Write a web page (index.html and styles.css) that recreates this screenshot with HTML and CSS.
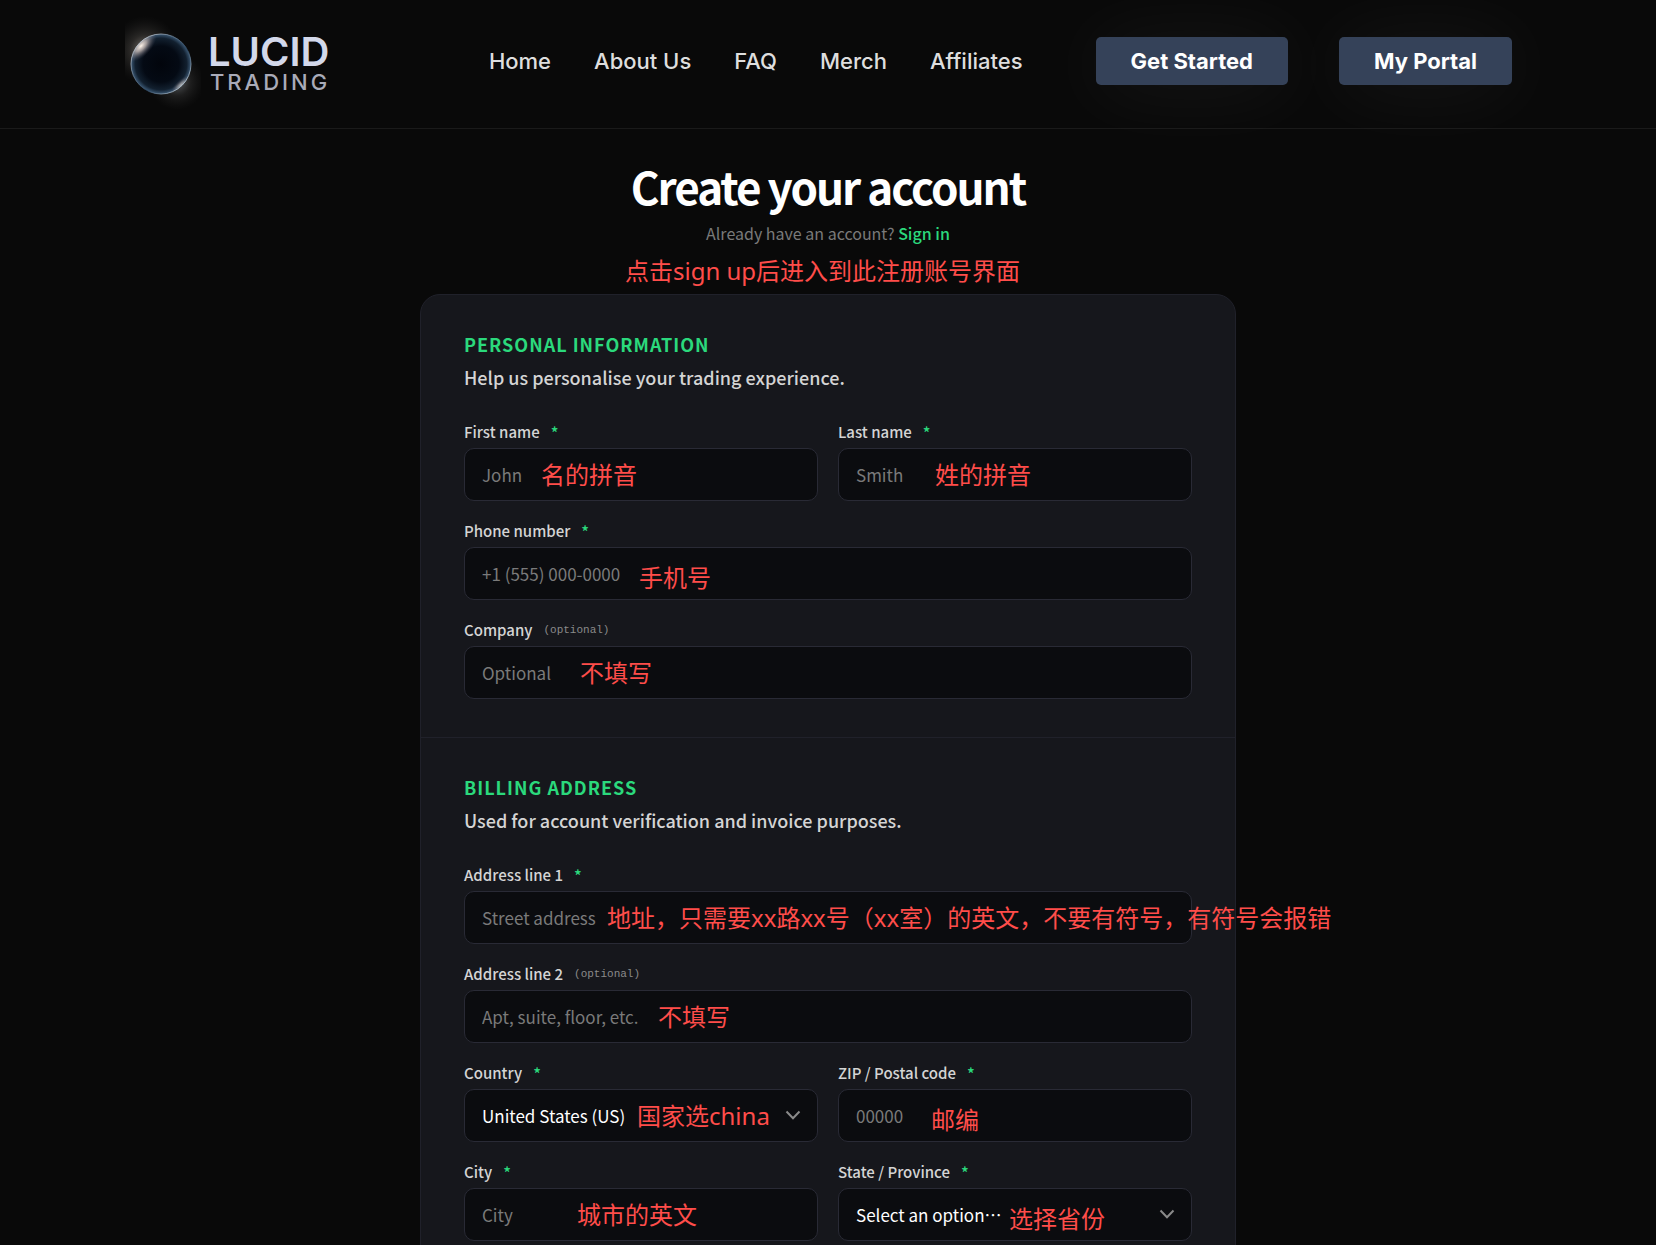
FILE: index.html
```html
<!DOCTYPE html>
<html lang="zh-CN">
<head>
<meta charset="utf-8">
<meta name="viewport" content="width=device-width, initial-scale=1">
<title>Create your account - Lucid Trading</title>
<link rel="stylesheet" href="styles.css">
</head>
<body>
<header class="site-header">
  <a class="logo" href="#" aria-label="Lucid Trading">
    <svg class="logo-mark" viewBox="0 0 76 100" width="76" height="100" aria-hidden="true">
      <defs>
        <radialGradient id="glowA"><stop offset="0" stop-color="#d8cdbf" stop-opacity=".6"/><stop offset=".45" stop-color="#8d8780" stop-opacity=".24"/><stop offset="1" stop-color="#444" stop-opacity="0"/></radialGradient>
        <radialGradient id="glowB"><stop offset="0" stop-color="#b9c6d2" stop-opacity=".5"/><stop offset=".5" stop-color="#777" stop-opacity=".18"/><stop offset="1" stop-color="#444" stop-opacity="0"/></radialGradient>
        <radialGradient id="orb" cx=".5" cy=".5" r=".5"><stop offset="0" stop-color="#02050c"/><stop offset=".6" stop-color="#040a14"/><stop offset=".86" stop-color="#12202f"/><stop offset="1" stop-color="#3b5874"/></radialGradient>
        <radialGradient id="shine"><stop offset="0" stop-color="#fff5ea"/><stop offset=".35" stop-color="#c4b8b4" stop-opacity=".8"/><stop offset="1" stop-color="#445" stop-opacity="0"/></radialGradient>
        <linearGradient id="rim" x1="0" y1="0" x2="1" y2="1"><stop offset="0" stop-color="#fff"/><stop offset=".35" stop-color="#74889c"/><stop offset=".6" stop-color="#2c4661"/><stop offset=".85" stop-color="#b8c9d6"/><stop offset="1" stop-color="#58748f"/></linearGradient>
        <clipPath id="orbClip"><circle cx="36" cy="50" r="30"/></clipPath>
      </defs>
      <circle cx="20" cy="36" r="34" fill="url(#glowA)"/>
      <circle cx="52" cy="68" r="28" fill="url(#glowB)"/>
      <circle cx="36" cy="50" r="30" fill="url(#orb)"/>
      <g clip-path="url(#orbClip)">
        <ellipse cx="16" cy="32" rx="20" ry="10" transform="rotate(-46 16 32)" fill="url(#shine)"/>
        <ellipse cx="56" cy="71" rx="14" ry="5" transform="rotate(-43 56 71)" fill="url(#shine)" opacity=".6"/>
      </g>
      <circle cx="36" cy="50" r="30" fill="none" stroke="url(#rim)" stroke-width="1" opacity=".8"/>
    </svg>
    <span class="logo-text"><span class="logo-name">LUCID</span><span class="logo-sub">TRADING</span></span>
  </a>
  <div class="header-menu">
    <nav class="nav">
      <a href="#">Home</a>
      <a href="#">About Us</a>
      <a href="#">FAQ</a>
      <a href="#">Merch</a>
      <a href="#">Affiliates</a>
    </nav>
    <div class="actions">
      <button class="cta" type="button">Get Started</button>
      <button class="cta" type="button">My Portal</button>
    </div>
  </div>
</header>

<main class="page">
  <div class="intro">
    <h1>Create your account</h1>
    <p class="signin">Already have an account? <a href="#">Sign in</a></p>
    <span class="note note-intro">点击sign up后进入到此注册账号界面</span>
  </div>

  <form class="card">
    <section class="section">
      <h2>PERSONAL INFORMATION</h2>
      <p class="lead">Help us personalise your trading experience.</p>
      <div class="grid">
        <div class="field">
          <label for="first">First name <span class="req">*</span></label>
          <div class="control"><input id="first" type="text" placeholder="John"><span class="note note-first">名的拼音</span></div>
        </div>
        <div class="field">
          <label for="last">Last name <span class="req">*</span></label>
          <div class="control"><input id="last" type="text" placeholder="Smith"><span class="note note-last">姓的拼音</span></div>
        </div>
        <div class="field wide">
          <label for="phone">Phone number <span class="req">*</span></label>
          <div class="control"><input id="phone" type="tel" placeholder="+1 (555) 000-0000"><span class="note note-low note-phone">手机号</span></div>
        </div>
        <div class="field wide">
          <label for="company">Company <span class="opt">(optional)</span></label>
          <div class="control"><input id="company" type="text" placeholder="Optional"><span class="note note-company">不填写</span></div>
        </div>
      </div>
    </section>

    <section class="section">
      <h2>BILLING ADDRESS</h2>
      <p class="lead">Used for account verification and invoice purposes.</p>
      <div class="grid">
        <div class="field wide">
          <label for="addr1">Address line 1 <span class="req">*</span></label>
          <div class="control"><input id="addr1" type="text" placeholder="Street address"><span class="note note-addr1">地址，只需要xx路xx号（xx室）的英文，不要有符号，有符号会报错</span></div>
        </div>
        <div class="field wide">
          <label for="addr2">Address line 2 <span class="opt">(optional)</span></label>
          <div class="control"><input id="addr2" type="text" placeholder="Apt, suite, floor, etc."><span class="note note-addr2">不填写</span></div>
        </div>
        <div class="field">
          <label for="country">Country <span class="req">*</span></label>
          <div class="control">
            <select id="country"><option>United States (US)</option><option>China</option></select>
            <svg class="chevron" viewBox="0 0 16 10" width="16" height="10" aria-hidden="true"><path d="M1.5 1.5 8 8.2 14.5 1.5"/></svg>
            <span class="note note-country">国家选china</span>
          </div>
        </div>
        <div class="field">
          <label for="zip">ZIP / Postal code <span class="req">*</span></label>
          <div class="control"><input id="zip" type="text" placeholder="00000"><span class="note note-low note-zip">邮编</span></div>
        </div>
        <div class="field">
          <label for="city">City <span class="req">*</span></label>
          <div class="control"><input id="city" type="text" placeholder="City"><span class="note note-city">城市的英文</span></div>
        </div>
        <div class="field">
          <label for="state">State / Province <span class="req">*</span></label>
          <div class="control">
            <select id="state"><option>Select an option…</option></select>
            <svg class="chevron" viewBox="0 0 16 10" width="16" height="10" aria-hidden="true"><path d="M1.5 1.5 8 8.2 14.5 1.5"/></svg>
            <span class="note note-low note-state">选择省份</span>
          </div>
        </div>
      </div>
    </section>
  </form>
</main>
</body>
</html>
```

FILE: styles.css
```css
* { box-sizing: border-box; }

html, body { height: 100%; }

body {
  margin: 0;
  overflow-x: hidden;
  overflow-y: auto;
  scrollbar-width: none;
  background: #090909;
  color: #d4d4d4;
  font-family: "Noto Sans CJK SC", "Noto Sans", sans-serif;
}

h1, h2, p { margin: 0; }
a { text-decoration: none; color: inherit; }

/* Header */
.site-header {
  display: flex;
  align-items: center;
  justify-content: space-between;
  min-height: 129px;
  padding: 0 144px 6px 125px;
  border-bottom: 1px solid #1a1a1a;
  font-family: Inter, "Liberation Sans", sans-serif;
}

.logo { display: flex; align-items: center; gap: 7px; padding-top: 6px; }
.logo-mark { display: block; }
.logo-text { display: flex; flex-direction: column; padding-bottom: 2px; color: #d3d8ea; }
.logo-name { font-size: 40px; line-height: 38px; font-weight: 600; }
.logo-sub { padding-left: 2px; font-size: 22px; line-height: 22px; font-weight: 500; letter-spacing: 3px; color: #a9abb8; }

.header-menu { display: flex; align-items: center; gap: 73px; }
.nav { display: flex; gap: 43px; font-size: 22px; line-height: 28px; font-weight: 500; color: #dedede; white-space: nowrap; }
.actions { display: flex; gap: 51px; }

.cta {
  height: 48px;
  padding: 0 35px;
  border: 0;
  border-radius: 5px;
  background: #354259;
  box-shadow: 0 4px 80px rgba(255, 255, 255, 0.07);
  color: #fff;
  font: 700 22px/28px Inter, "Liberation Sans", sans-serif;
  white-space: nowrap;
}

/* Page intro */
.page { padding: 29px 24px 0; }

.intro { position: relative; margin-bottom: 49px; text-align: center; }
.intro h1 { font-size: 44px; line-height: 56px; font-weight: 700; letter-spacing: -2px; color: #fff; }
.signin { margin-top: 7px; font-size: 16px; line-height: 24px; color: #7a7a7a; }
.signin a { color: #2bd97c; font-weight: 500; }

/* Form card */
.card {
  max-width: 816px;
  margin: 0 auto;
  border: 1px solid #20212a;
  border-radius: 20px;
  background: #16171c;
}

.section { padding: 35px 43px 38px; }
.section + .section { border-top: 1px solid #20212a; }
.section h2 { font-size: 18px; line-height: 28px; font-weight: 700; letter-spacing: 1px; color: #2bd97c; }
.lead { margin: 5px 0 29px; font-size: 18px; line-height: 28px; font-weight: 500; }

.grid { display: grid; grid-template-columns: 1fr 1fr; gap: 18px 20px; }
.wide { grid-column: 1 / -1; }

.field label { display: flex; gap: 11px; margin-bottom: 4px; font-size: 15px; line-height: 24px; font-weight: 500; }
.req { font-size: 16px; line-height: 24px; color: #2bd97c; }
.opt { font: 400 11px/24px "Liberation Mono", monospace; color: #8a8a8a; }

.control { position: relative; }
.control input,
.control select {
  display: block;
  width: 100%;
  height: 53px;
  padding: 0 17px;
  border: 1px solid #292a35;
  border-radius: 10px;
  background: #0b0c0f;
  color: #fff;
  font: 400 17px/28px "Noto Sans CJK SC", "Noto Sans", sans-serif;
  appearance: none;
}
.control input::placeholder { color: #7a7a7a; opacity: 1; }

.chevron { position: absolute; top: 21px; right: 17px; fill: none; stroke: #8a8a8a; stroke-width: 2; }

/* Guide notes that lie over the form */
.note {
  position: absolute;
  top: 11px;
  z-index: 1;
  color: #ff4d4a;
  font: 400 24px/32px "Noto Sans", "Noto Sans CJK SC", sans-serif;
  white-space: nowrap;
  pointer-events: none;
}
.note-low { top: 15px; }
.note-intro { top: auto; bottom: -42px; left: 50%; margin-left: -203px; }
.note-first { left: 77px; }
.note-last { left: 97px; }
.note-phone { left: 175px; }
.note-company { left: 116px; }
.note-addr1 { left: 143px; }
.note-addr2 { left: 194px; }
.note-country { left: 173px; }
.note-zip { left: 93px; }
.note-city { left: 113px; }
.note-state { left: 171px; }
```
